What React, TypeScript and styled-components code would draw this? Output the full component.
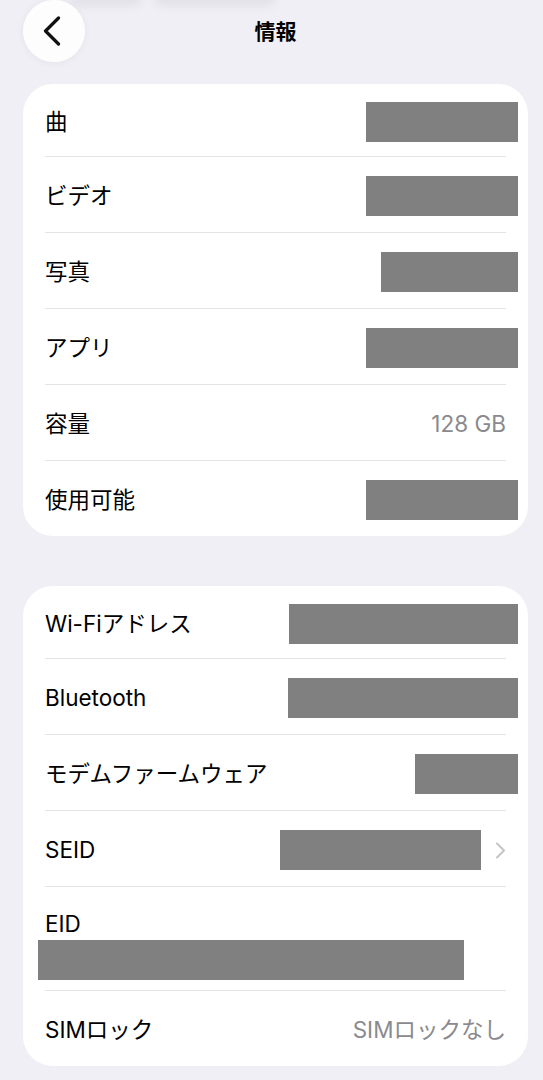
import React from "react";
import styled, { createGlobalStyle } from "styled-components";

const GlobalStyle = createGlobalStyle`
  html, body {
    margin: 0;
    padding: 0;
    background: #f0eff5;
  }
  body {
    font-family: "Inter", "Noto Sans CJK JP", sans-serif;
    -webkit-font-smoothing: antialiased;
  }
  * { box-sizing: border-box; }
`;

const Page = styled.div`
  width: 543px;
  min-height: 1080px;
  padding: 0 15px 0 23px;
  display: flex;
  flex-direction: column;
  overflow: hidden;
`;

const NavBar = styled.header`
  position: relative;
  height: 84px;
  display: grid;
  grid-template-columns: 62px 1fr 62px;
  align-items: start;
`;

const GhostStrip = styled.div`
  position: absolute;
  top: -8px;
  left: 48px;
  display: flex;
  gap: 14px;
  filter: blur(4px);
  pointer-events: none;
`;

const GhostBlob = styled.div<{ $w: number }>`
  width: ${(p) => p.$w}px;
  height: 14px;
  border-radius: 6px;
  background: rgba(60, 60, 70, 0.07);
`;

const BackButton = styled.button`
  position: relative;
  z-index: 1;
  width: 62px;
  height: 62px;
  border-radius: 50%;
  border: none;
  padding: 0;
  background: rgba(255, 255, 255, 0.88);
  box-shadow: 0 1px 8px rgba(0, 0, 0, 0.05);
  display: flex;
  align-items: center;
  justify-content: center;
  cursor: pointer;
  svg { margin-left: -4px; }
`;

const Title = styled.h1`
  position: relative;
  z-index: 1;
  margin: 0;
  line-height: 64px;
  text-align: center;
  font-size: 21px;
  font-weight: 700;
  color: #000;
`;

const Card = styled.section<{ $gap?: number }>`
  background: #fff;
  border-radius: 30px;
  margin-top: ${(p) => p.$gap ?? 0}px;
  display: flex;
  flex-direction: column;
  overflow: hidden;
`;

const Row = styled.div<{ $first?: boolean }>`
  display: flex;
  align-items: center;
  justify-content: space-between;
  height: ${(p) => (p.$first ? 72 : 75)}px;
  padding: 3px 22px 0 22px;
`;

const StackRow = styled.div`
  display: flex;
  flex-direction: column;
  padding: 23px 22px 10px 22px;
`;

const Divider = styled.div`
  height: 1px;
  margin: 0 22px;
  background: #e4e4e7;
`;

const Label = styled.span`
  font-size: 22.5px;
  line-height: 28px;
  color: #000;
`;

const Value = styled.span`
  font-size: 22.5px;
  line-height: 28px;
  color: #8a8a8e;
`;

const Redact = styled.div<{ $w: number; $mr?: number; $ml?: number; $mt?: number }>`
  width: ${(p) => p.$w}px;
  height: 40px;
  background: #808080;
  margin-right: ${(p) => p.$mr ?? -12}px;
  margin-left: ${(p) => p.$ml ?? 0}px;
  margin-top: ${(p) => p.$mt ?? 0}px;
  flex-shrink: 0;
`;

const Trailing = styled.div`
  display: flex;
  align-items: center;
  gap: 14px;
`;

const Chevron = () => (
  <svg width="11" height="17" viewBox="0 0 11 17" fill="none">
    <path d="M2 1.5 L9 8.5 L2 15.5" stroke="#c4c4c7" strokeWidth="2" strokeLinecap="round" strokeLinejoin="round" />
  </svg>
);

const BackChevron = () => (
  <svg width="18" height="30" viewBox="0 0 18 30" fill="none">
    <path d="M15.5 2 L2.5 15 L15.5 28" stroke="#111" strokeWidth="3.2" strokeLinecap="round" strokeLinejoin="round" />
  </svg>
);

type Item = { label: string; redact?: number; value?: string };

const storage: Item[] = [
  { label: "曲", redact: 152 },
  { label: "ビデオ", redact: 152 },
  { label: "写真", redact: 137 },
  { label: "アプリ", redact: 152 },
  { label: "容量", value: "128 GB" },
  { label: "使用可能", redact: 152 },
];

const network: Item[] = [
  { label: "Wi-Fiアドレス", redact: 229 },
  { label: "Bluetooth", redact: 230 },
  { label: "モデムファームウェア", redact: 103 },
];

const renderRow = (it: Item, i: number) => (
  <React.Fragment key={it.label}>
    {i > 0 && <Divider />}
    <Row $first={i === 0}>
      <Label>{it.label}</Label>
      {it.redact ? <Redact $w={it.redact} /> : <Value>{it.value}</Value>}
    </Row>
  </React.Fragment>
);

export default function App() {
  return (
    <>
      <GlobalStyle />
      <Page>
        <NavBar>
          <GhostStrip aria-hidden>
            <GhostBlob $w={70} />
            <GhostBlob $w={120} />
          </GhostStrip>
          <BackButton aria-label="戻る">
            <BackChevron />
          </BackButton>
          <Title>情報</Title>
          <span />
        </NavBar>

        <Card>{storage.map(renderRow)}</Card>

        <Card $gap={50}>
          {network.map(renderRow)}
          <Divider />
          <Row>
            <Label>SEID</Label>
            <Trailing>
              <Redact $w={201} $mr={0} />
              <Chevron />
            </Trailing>
          </Row>
          <Divider />
          <StackRow>
            <Label>EID</Label>
            <Redact $w={426} $ml={-7} $mr={0} $mt={2} />
          </StackRow>
          <Divider />
          <Row>
            <Label>SIMロック</Label>
            <Value>SIMロックなし</Value>
          </Row>
        </Card>
      </Page>
    </>
  );
}
